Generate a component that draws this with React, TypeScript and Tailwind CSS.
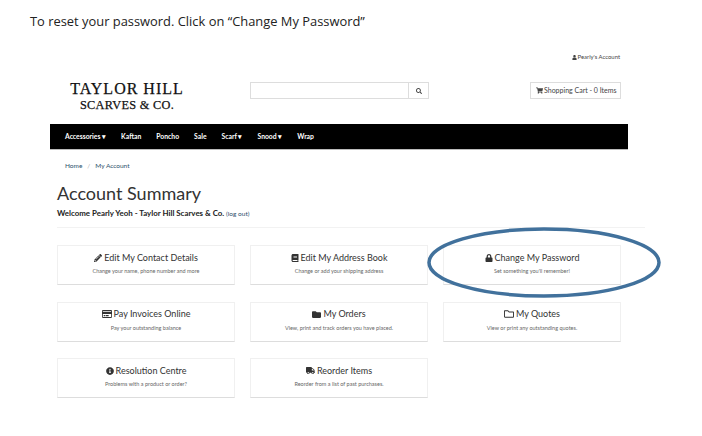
import { FaSearch, FaShoppingCart, FaUser, FaPencilAlt, FaBook, FaLock, FaRegCreditCard, FaFolder, FaRegFolder, FaInfoCircle, FaTruck } from "react-icons/fa";

const cards = [
  { icon: <FaPencilAlt size={8} />, title: "Edit My Contact Details", text: "Change your name, phone number and more" },
  { icon: <FaBook size={8} />, title: "Edit My Address Book", text: "Change or add your shipping address" },
  { icon: <FaLock size={8} />, title: "Change My Password", text: "Set something you'll remember!" },
  { icon: <FaRegCreditCard size={10} />, title: "Pay Invoices Online", text: "Pay your outstanding balance" },
  { icon: <FaFolder size={9} />, title: "My Orders", text: "View, print and track orders you have placed." },
  { icon: <FaRegFolder size={10} />, title: "My Quotes", text: "View or print any outstanding quotes." },
  { icon: <FaInfoCircle size={8} />, title: "Resolution Centre", text: "Problems with a product or order?" },
  { icon: <FaTruck size={9} />, title: "Reorder Items", text: "Reorder from a list of past purchases." },
];

const menu = ["Accessories ▾", "Kaftan", "Poncho", "Sale", "Scarf ▾", "Snood ▾", "Wrap"];

export default function App() {
  return (
    <div className="relative w-[702px] h-[436px] overflow-hidden bg-white font-['Lato',sans-serif] text-[#333]">
      <p className="pl-[30px] pt-[13px] h-[50px] font-['Open_Sans',sans-serif] text-[12.9px] leading-[17px] text-[#222]">
        To reset your password. Click on “Change My Password”
      </p>

      <div className="flex justify-end items-center gap-[1px] pr-[82px] h-[14px] text-[5.9px] text-[#444]">
        <FaUser size={5} />
        <span>Pearly's Account</span>
      </div>

      <div className="flex items-start pl-[50px] mt-[18px] h-[42px]">
        <div className="w-[154px] mr-[46px] -mt-[1px] text-center font-['Liberation_Serif',serif] text-[#111] [-webkit-text-stroke:0.25px_#111]">
          <div className="text-[16px] leading-[15px] tracking-[1px]">TAYLOR HILL</div>
          <div className="text-[12.3px] leading-[18px] tracking-[0.3px]">SCARVES &amp; CO.</div>
        </div>
        <div className="flex w-[179px] h-[17px] border border-[#ddd]">
          <div className="flex-1 border-r border-[#ddd]" />
          <div className="flex w-[19px] items-center justify-center text-[#444]">
            <FaSearch size={6} />
          </div>
        </div>
        <div className="flex items-center gap-[1px] ml-[101px] w-[91px] h-[17px] border border-[#ddd] pl-[5px] text-[7px] text-[#444]">
          <FaShoppingCart size={7} />
          <span>Shopping Cart - 0 Items</span>
        </div>
      </div>

      <nav className="flex items-center gap-[15px] ml-[50px] w-[578px] h-[26px] pl-[15px] bg-black border-b border-[#bbb] text-[6.8px] font-bold text-white">
        {menu.map((item) => (
          <span key={item}>{item}</span>
        ))}
      </nav>

      <div className="flex gap-[5px] pl-[65px] pt-[12px] h-[31px] text-[6.5px] leading-[8px] text-[#2d4f6b]">
        <span>Home</span>
        <span className="text-[#aaa]">/</span>
        <span>My Account</span>
      </div>

      <h1 className="pl-[57px] text-[18px] leading-[24px] text-[#333]">Account Summary</h1>

      <p className="pl-[57px] mt-[3px] h-[19px] text-[7.9px] leading-[10px] font-bold text-[#222]">
        Welcome Pearly Yeoh - Taylor Hill Scarves &amp; Co. <span className="text-[6.5px] font-normal text-[#2d4f6b]">(log out)</span>
      </p>

      <div className="mx-[57px] border-t border-[#f2f2f2]" />

      <div className="grid grid-cols-[178px_178px_178px] auto-rows-[40px] gap-x-[15px] gap-y-[16.5px] pl-[57px] mt-[17px]">
        {cards.map((card) => (
          <div key={card.title} className="flex flex-col items-center border border-[#f0f0f0] border-b-[#ddd] pt-[4px]">
            <div className="flex items-center gap-[2px] h-[15px] text-[9px] text-[#333]">
              {card.icon}
              <span>{card.title}</span>
            </div>
            <div className="mt-[2px] text-[5.5px] leading-[8px] text-[#666]">{card.text}</div>
          </div>
        ))}
      </div>

      {/* highlight drawn over the page */}
      <svg className="absolute left-[425px] top-[225px]" width="240" height="75" viewBox="0 0 240 75" fill="none">
        <ellipse cx="119" cy="37.5" rx="115" ry="33.5" stroke="#41719c" strokeWidth="3.5" />
      </svg>
    </div>
  );
}
